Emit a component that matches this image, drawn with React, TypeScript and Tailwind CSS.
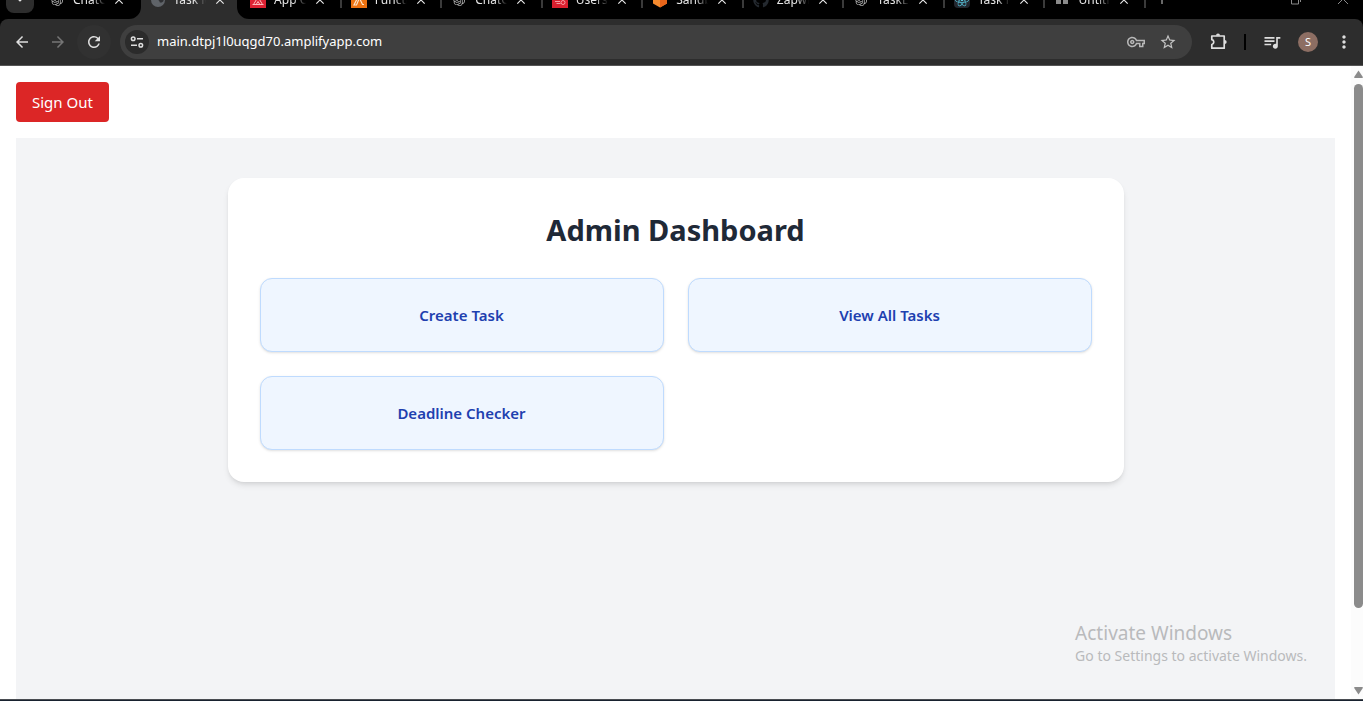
import type { ReactNode } from 'react';
import {
  MdArrowBack,
  MdArrowForward,
  MdClose,
  MdMoreVert,
  MdOutlineVpnKey,
  MdQueueMusic,
  MdRefresh,
  MdStarBorder,
} from 'react-icons/md';
import { FaGithub } from 'react-icons/fa';
import { SiOpenai, SiReact } from 'react-icons/si';

type Tab = { title: string; icon: ReactNode; active?: boolean; divider?: boolean };

const chatIcon = <SiOpenai className="size-3 text-[#b4b4b4]" />;

const globeIcon = (
  <svg viewBox="0 0 16 16" className="size-4">
    <circle cx="8" cy="8" r="7" fill="#5f6368" />
    <path d="M8 2.500c-2 .5-3 2-2.500 4C6.500 8 9 7.500 9.500 9.500c.3 1.800 2.500 1.500 4-.5C14 5 11.500 2.200 8 2.500z" fill="#2f3033" />
  </svg>
);

const amplifyIcon = (
  <svg viewBox="0 0 16 16" className="size-4">
    <rect width="16" height="16" fill="#dd2233" />
    <path d="M3.500 12.500 8 5l4.500 7.500zM6.200 12.500 8 9.500l1.800 3M2.500 12.500h11" fill="none" stroke="#ffb9bd" strokeWidth="1" />
  </svg>
);

const lambdaIcon = (
  <svg viewBox="0 0 16 16" className="size-4">
    <rect width="16" height="16" fill="#ed7211" />
    <path d="M4.500 3H7l4.500 9.500H13M7.800 7.500 5.500 13H3l3.500-7" fill="none" stroke="#ffe3c7" strokeWidth="1.200" />
  </svg>
);

const cognitoIcon = (
  <svg viewBox="0 0 16 16" className="size-4">
    <rect width="16" height="16" fill="#d9202f" />
    <path d="M3 9.500h5M4.500 11.500h4" stroke="#f59aa1" strokeWidth="1" />
    <circle cx="11" cy="10.500" r="2" fill="none" stroke="#f59aa1" />
  </svg>
);

const sandboxIcon = (
  <svg viewBox="0 0 16 16" className="size-4">
    <path d="M1 4 8 1l7 3v7.500L8 15.500 1 11.500z" fill="#f58a2e" />
    <path d="M8 7.500 15 4v7.500l-7 4z" fill="#e8651a" />
  </svg>
);

const reactIcon = (
  <span className="flex size-4 items-center justify-center rounded-sm bg-[#23272f]">
    <SiReact className="size-3.5 text-[#58c4dc]" />
  </span>
);

const gridIcon = (
  <svg viewBox="0 0 16 16" className="size-4" fill="#8a8a8a">
    <path d="M2 2h5v4H2zM9 2h5v4H9zM2 8h5v4H2zM9 8h5v4H9z" />
  </svg>
);

const tabs: Tab[] = [
  { title: 'ChatGPT', icon: chatIcon },
  { title: 'Task Manager', icon: globeIcon, active: true },
  { title: 'App Overview', icon: amplifyIcon, divider: true },
  { title: 'Functions', icon: lambdaIcon, divider: true },
  { title: 'ChatGPT', icon: chatIcon, divider: true },
  { title: 'Users', icon: cognitoIcon, divider: true },
  { title: 'Sandbox', icon: sandboxIcon, divider: true },
  { title: 'Zapwize', icon: <FaGithub className="size-4 text-[#24292f]" />, divider: true },
  { title: 'TaskEase', icon: chatIcon, divider: true },
  { title: 'Task Manager', icon: reactIcon, divider: true },
  { title: 'Untitled', icon: gridIcon, divider: true },
];

function TabItem({ title, icon, active, divider }: Tab) {
  return (
    <div className={active ? 'relative flex min-w-0 items-center bg-[#2d2d2d] pl-[9px]' : 'relative flex min-w-0 items-center pl-[9px]'}>
      <span className="flex size-4 shrink-0 items-center justify-center">{icon}</span>
      <span className="ml-2 w-8 overflow-hidden text-[12px] leading-4 whitespace-nowrap text-[#e8e8e8] [mask-image:linear-gradient(to_right,black_60%,transparent)]">
        {title}
      </span>
      <button type="button" aria-label={`Close ${title}`} className="ml-1.5 flex size-4 items-center justify-center text-[#e8e8e8]">
        <MdClose className="size-3.5" />
      </button>
      {active && (
        <>
          <span className="absolute right-0 h-full w-1 bg-black" />
          <svg viewBox="0 0 8 8" className="absolute bottom-0 -left-3 size-3" fill="#2d2d2d">
            <path d="M8 0v8H0A8 8 0 0 0 8 0z" />
          </svg>
          <svg viewBox="0 0 8 8" className="absolute -right-2 bottom-0 size-3" fill="#2d2d2d">
            <path d="M0 0a8 8 0 0 0 8 8H0z" />
          </svg>
        </>
      )}
      {divider && <span className="ml-auto h-4 w-0.5 bg-[#3a3a3a]" />}
    </div>
  );
}

function TabStrip() {
  return (
    <div className="flex h-[19px] shrink-0 items-end overflow-hidden bg-black">
      <div className="flex h-[38px] flex-1 items-stretch">
        <div className="flex w-10 shrink-0 items-center pl-1.5">
          <button type="button" aria-label="Search tabs" className="flex h-[26px] w-7 items-center justify-center rounded-lg bg-[#2d2d2d]">
            <svg viewBox="0 0 10 10" className="size-2" fill="none" stroke="#e8e8e8" strokeWidth="1.800">
              <path d="m1 2 4 4 4-4" />
            </svg>
          </button>
        </div>
        <div className="grid flex-1 grid-cols-11">
          {tabs.map((tab, i) => (
            <TabItem key={i} {...tab} />
          ))}
        </div>
        <div className="flex w-[217px] shrink-0 items-center text-[#8a8a8a]">
          <button type="button" aria-label="New tab" className="ml-2.5">
            <svg viewBox="0 0 12 12" className="size-3" fill="none" stroke="currentColor" strokeWidth="1.500">
              <path d="M6 0v10M1 5h10" />
            </svg>
          </button>
          <button type="button" aria-label="Restore window" className="ml-auto">
            <svg viewBox="0 0 10 10" className="size-2.5" fill="none" stroke="currentColor">
              <path d="M.5 2.500h7v6.500h-7zM2.500.5h7V7" />
            </svg>
          </button>
          <button type="button" aria-label="Close window" className="mr-3.5 ml-9">
            <svg viewBox="0 0 12 12" className="size-3" fill="none" stroke="currentColor">
              <path d="m1 0 10 10M11 0 1 10" />
            </svg>
          </button>
        </div>
      </div>
    </div>
  );
}

function Toolbar() {
  return (
    <div className="shrink-0 bg-black">
      <div className="flex h-[47px] items-center rounded-t-lg border-b border-[#555555] bg-[#2d2d2d] pr-[9px] pl-3 text-[#dedede]">
        <button type="button" aria-label="Back" className="flex size-5 items-center justify-center">
          <MdArrowBack className="size-[18px]" />
        </button>
        <button type="button" aria-label="Forward" className="ml-4 flex size-5 items-center justify-center text-[#757575]">
          <MdArrowForward className="size-[18px]" />
        </button>
        <button type="button" aria-label="Reload" className="ml-[9px] flex size-[34px] items-center justify-center rounded-full bg-[#313131]">
          <MdRefresh className="size-[18px]" />
        </button>
        <div className="ml-[9px] flex h-[34px] flex-1 items-center rounded-full bg-[#3f3f3f] px-[5px]">
          <button type="button" aria-label="Site information" className="flex size-6 shrink-0 items-center justify-center rounded-full bg-[#2b2b2b]">
            <svg viewBox="0 0 14 14" className="size-3.5" fill="none" stroke="currentColor" strokeWidth="1.500">
              <circle cx="3.200" cy="3.800" r="1.800" />
              <path d="M7 3.800h6M1 10.200h6" />
              <circle cx="10.800" cy="10.200" r="1.800" />
            </svg>
          </button>
          <input
            type="text"
            aria-label="Address"
            defaultValue="main.dtpj1l0uqgd70.amplifyapp.com"
            className="ml-2 min-w-0 flex-1 bg-transparent text-[13px] text-white outline-none"
          />
          <button type="button" aria-label="Saved passwords" className="flex size-5 items-center justify-center text-[#b8b8b8]">
            <MdOutlineVpnKey className="size-[18px]" />
          </button>
          <button type="button" aria-label="Bookmark this page" className="mr-[9px] ml-3 flex size-5 items-center justify-center text-[#c4c4c4]">
            <MdStarBorder className="size-[18px]" />
          </button>
        </div>
        <button type="button" aria-label="Extensions" className="ml-4 flex size-5 items-center justify-center">
          <svg viewBox="0 0 20 20" className="size-5" fill="none" stroke="currentColor" strokeWidth="1.700" strokeLinejoin="round">
            <path d="M3.800 4h12.400v12.200H3.800v-3.700c1.300-.3 2-1.200 2-2.400s-.7-2.100-2-2.400z" />
            <path d="M8 3.800a2 2.200 0 0 1 4 0zM16.500 8a2.200 2 0 0 1 0 4z" fill="currentColor" stroke="none" />
          </svg>
        </button>
        <span className="ml-4 h-4 w-0.5 bg-black" />
        <button type="button" aria-label="Media controls" className="ml-4 flex size-5 items-center justify-center">
          <MdQueueMusic className="size-5" />
        </button>
        <button type="button" aria-label="Profile" className="ml-4 flex size-5 items-center justify-center rounded-full bg-[#8d6e63] text-[11px] text-white">
          S
        </button>
        <button type="button" aria-label="Menu" className="ml-4 flex size-5 items-center justify-center">
          <MdMoreVert className="size-5" />
        </button>
      </div>
    </div>
  );
}

function Dashboard() {
  const actions = ['Create Task', 'View All Tasks', 'Deadline Checker'];
  return (
    <section className="min-h-screen bg-[#f3f4f6] p-10">
      <div className="mx-auto max-w-4xl rounded-2xl bg-white p-8 shadow-md">
        <h1 className="mb-7 text-center text-[29px] leading-10 font-bold text-[#1f2937]">Admin Dashboard</h1>
        <div className="grid grid-cols-2 gap-6">
          {actions.map((action) => (
            <button
              key={action}
              type="button"
              className="rounded-xl border border-[#bfdbfe] bg-[#eff6ff] p-6 text-[15px] leading-6 font-semibold text-[#1e40af] shadow-sm"
            >
              {action}
            </button>
          ))}
        </div>
      </div>
    </section>
  );
}

function ScrollBar() {
  return (
    <div aria-hidden="true" className="flex w-3 shrink-0 flex-col items-end bg-[#fcfcfc] py-1 text-[#8b8b8b]">
      <svg viewBox="0 0 9 8" className="h-2 w-[9px]" fill="currentColor">
        <path d="M4.500.5 9 7.200 8.300 8H.7L0 7.200z" />
      </svg>
      <div className="mt-1.5 flex min-h-0 w-[9px] flex-1 flex-col">
        <div className="flex-[525] rounded-full bg-[#8b8b8b]" />
        <div className="flex-[79]" />
      </div>
      <svg viewBox="0 0 9 8" className="h-2 w-[9px]" fill="currentColor">
        <path d="M4.500 7.500 9 .8 8.300 0H.7L0 .8z" />
      </svg>
    </div>
  );
}

export default function App() {
  return (
    <div className="flex h-screen flex-col overflow-hidden bg-white font-['Segoe_UI','Noto_Sans',sans-serif]">
      <TabStrip />
      <Toolbar />
      <div className="relative flex min-h-0 flex-1">
        <main className="min-w-0 flex-1 overflow-hidden p-4">
          <button type="button" className="mb-4 block rounded-sm bg-[#dc2626] px-4 py-2 text-[15px] leading-6 text-white">
            Sign Out
          </button>
          <Dashboard />
        </main>
        <ScrollBar />
        <div className="pointer-events-none absolute right-14 bottom-8 text-[#b9babc]">
          <p className="text-[19px] leading-6">Activate Windows</p>
          <p className="text-[14px] leading-[22px]">Go to Settings to activate Windows.</p>
        </div>
      </div>
      <div className="h-0.5 shrink-0 border-t border-[#4a4d52] bg-[#18222f]" />
    </div>
  );
}
